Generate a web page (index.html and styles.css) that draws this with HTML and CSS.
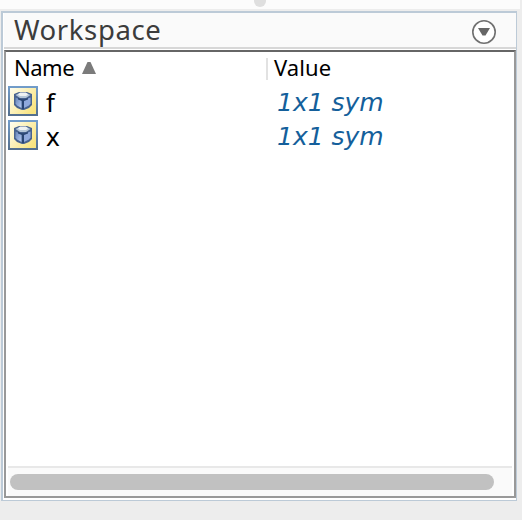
FILE: index.html
```
<!DOCTYPE html>
<html lang="en">
<head>
<meta charset="utf-8">
<title>Workspace</title>
<link rel="stylesheet" href="styles.css">
</head>
<body>
<svg class="defs" width="0" height="0">
  <defs>
    <linearGradient id="edge" x2="0" y2="1"><stop stop-color="#729dcb"/><stop offset="1" stop-color="#536e8d"/></linearGradient>
    <linearGradient id="gold" x2="1" y2=".7"><stop stop-color="#fffef0"/><stop offset="1" stop-color="#f9e481"/></linearGradient>
    <linearGradient id="side" x2="1" y2="1"><stop stop-color="#6584b8"/><stop offset="1" stop-color="#b5cbf5"/></linearGradient>
    <symbol id="cube" viewBox="0 0 30 30">
      <path fill="url(#edge)" d="M0 0h30v30H0z"/>
      <path fill="url(#gold)" d="M2 2h26v26H2z"/>
      <path fill="#48638f" d="M6 8l5-2h8l5 2v11l-3 3-5 2h-2l-5-2-3-3z"/>
      <path fill="url(#side)" d="M7.500 11.500l6 2.500v8L9 19.500l-1.500-2z"/>
      <path fill="#8fa9dc" d="M16 14l6.500-2.500v6L21 19.500 16 22z"/>
      <path fill="#b4c6d8" d="M7.500 9l4-2h7l4 2L18 12h-6z"/>
      <path fill="#eef2f3" d="M12 6.500h6l2 2-2 1.500h-6l-2-1.500z"/>
      <path fill="#294573" d="M10 12l4 1.200h2l4-1.200v1.500L16 15v8h-2v-8l-4-1.500z"/>
    </symbol>
  </defs>
</svg>
<div class="splitter"><span class="grip"></span></div>
<section class="panel">
  <header class="titlebar">
    <h1>Workspace</h1>
    <svg class="menu" width="26" height="26" viewBox="0 0 26 26">
      <circle cx="13" cy="13" r="11.200" fill="#fff" stroke="#707070" stroke-width="1.600"/>
      <path d="M7 9h12l-4.500 7.500h-3z" fill="#666"/>
    </svg>
  </header>
  <div class="content">
    <div class="row head">
      <div class="name"><span class="label-name">Name</span><svg class="sort" width="14" height="12" viewBox="0 0 14 12"><path d="M5.500 0h3L14 12H0z" fill="#7b7b7b"/></svg></div>
      <div class="value"><span class="label-value">Value</span></div>
    </div>
    <div class="row item">
      <div class="name"><svg class="icon"><use href="#cube"/></svg><span>f</span></div>
      <div class="value"><em>1x1 sym</em></div>
    </div>
    <div class="row item">
      <div class="name"><svg class="icon"><use href="#cube"/></svg><span>x</span></div>
      <div class="value"><em>1x1 sym</em></div>
    </div>
    <div class="track"><div class="thumb"></div></div>
  </div>
</section>
</body>
</html>
```
FILE: styles.css
```
* { box-sizing: border-box; }
body {
  margin: 0;
  width: 522px;
  height: 520px;
  overflow: hidden;
  background: #ededed;
  font-family: "Noto Sans", "Open Sans", sans-serif;
  color: #000;
}
.defs { position: absolute; }
.splitter {
  width: 520px;
  height: 9px;
  overflow: hidden;
  background: #fcfcfc;
}
.grip {
  display: block;
  width: 12px;
  height: 12px;
  margin: -5px 0 0 254px;
  border-radius: 50%;
  background: #dfdfdf;
}
.panel {
  width: 516px;
  height: 490px;
  margin: 2px 0 0 1px;
  padding: 0 0 2px 1px;
  background: #fff;
  border: solid #bccad7;
  border-width: 2px 1px 1px 2px;
}
.titlebar {
  display: flex;
  justify-content: space-between;
  height: 36px;
  padding: 0 19px 0 10px;
  background: #fafafa;
  border-bottom: 2px solid #d7d7d7;
}
h1 {
  margin: 0;
  font-size: 27.500px;
  font-weight: 400;
  line-height: 34px;
  letter-spacing: .6px;
  color: #3c3c3c;
}
.menu { margin-top: 6px; }
.content {
  display: flex;
  flex-direction: column;
  height: 448px;
  margin-top: 1px;
  padding: 0 2px;
  background: #fff;
  border: 2px solid #999;
  border-top-color: #666;
}
.row { display: flex; height: 34px; }
.name { display: flex; align-items: center; width: 258px; }
.value { display: flex; align-items: center; }
.head { height: 32px; font-size: 22px; }
.head .name { height: 30px; padding-left: 6px; }
.head .value {
  height: 22px;
  margin-top: 6px;
  padding-left: 6px;
  border-left: 2px solid #e2e2e2;
}
.label-name { letter-spacing: -.5px; }
.label-value { margin-top: -4px; letter-spacing: .1px; }
.sort { margin: 2px 0 0 8px; }
.item { font-size: 26px; }
.item .name span { margin: 1px 0 0 8px; }
.item .value { padding: 3px 0 0 11px; }
.icon { width: 30px; height: 30px; }
em {
  font-family: "DejaVu Sans", sans-serif;
  font-size: 25px;
  color: #145f9b;
}
.track {
  height: 30px;
  margin-top: auto;
  padding: 6px 0 0 2px;
  background: #fafafa;
  border-top: 2px solid #e8e8e8;
}
.thumb {
  width: 484px;
  height: 16px;
  border-radius: 8px;
  background: #c1c1c1;
}
```
